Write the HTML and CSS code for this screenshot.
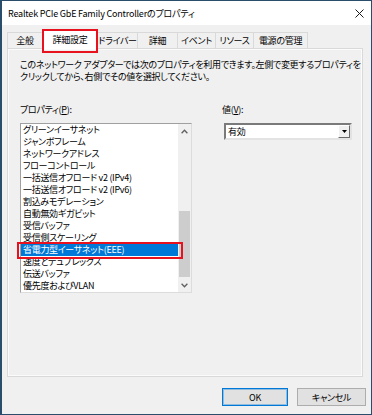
FILE: index.html
```html
<!DOCTYPE html>
<html lang="ja">
<head>
    <meta charset="UTF-8">
    <meta name="viewport" content="width=device-width, initial-scale=1.0">
    <title>Realtek PCIe GbE Family Controllerのプロパティ</title>
    <link rel="stylesheet" href="styles.css">
</head>
<body>

    <div class="window">
        <!-- Title bar -->
        <div class="titlebar">
            <span class="title">Realtek PCIe GbE Family Controllerのプロパティ</span>
            <svg class="close" width="9" height="9" viewBox="0 0 9 9">
                <path d="M0.5 0.5L8.5 8.5M8.5 0.5L0.5 8.5" stroke="#1a1a1a" stroke-width="1"/>
            </svg>
        </div>

        <div class="dialog">
            <!-- Tabs -->
            <div class="tabs">
                <div class="tab tab-general">全般</div>
                <div class="tab tab-advanced active">詳細設定</div>
                <div class="tab tab-driver">ドライバー</div>
                <div class="tab tab-details">詳細</div>
                <div class="tab tab-events">イベント</div>
                <div class="tab tab-resources">リソース</div>
                <div class="tab tab-power">電源の管理</div>
            </div>

            <!-- Tab page -->
            <div class="panel">
                <p class="desc">このネットワーク アダプターでは次のプロパティを利用できます。左側で変更するプロパティを<br>クリックしてから、右側でその値を選択してください。</p>

                <div class="columns">
                    <div class="col-left">
                        <div class="label">プロパティ(<span class="key">P</span>):</div>
                        <div class="listbox">
                            <div class="items">
                                <div class="item">グリーンイーサネット</div>
                                <div class="item">ジャンボフレーム</div>
                                <div class="item">ネットワークアドレス</div>
                                <div class="item">フローコントロール</div>
                                <div class="item">一括送信オフロード v2 (IPv4)</div>
                                <div class="item">一括送信オフロード v2 (IPv6)</div>
                                <div class="item">割込みモデレーション</div>
                                <div class="item">自動無効ギガビット</div>
                                <div class="item">受信バッファ</div>
                                <div class="item">受信側スケーリング</div>
                                <div class="item selected">省電力型イーサネット(EEE)</div>
                                <div class="item">速度とデュプレックス</div>
                                <div class="item">伝送バッファ</div>
                                <div class="item">優先度およびVLAN</div>
                            </div>
                            <div class="scrollbar">
                                <div class="arrow">
                                    <svg width="7" height="5" viewBox="0 0 7 5"><path d="M0.6 4.2L3.5 1.2L6.4 4.2" fill="none" stroke="#606060" stroke-width="1.3"/></svg>
                                </div>
                                <div class="track">
                                    <div class="thumb"></div>
                                </div>
                                <div class="arrow">
                                    <svg width="7" height="5" viewBox="0 0 7 5"><path d="M0.6 0.8L3.5 3.8L6.4 0.8" fill="none" stroke="#606060" stroke-width="1.3"/></svg>
                                </div>
                            </div>
                        </div>
                    </div>

                    <div class="col-right">
                        <div class="label">値(<span class="key">V</span>):</div>
                        <div class="select">
                            <span class="select-value">有効</span>
                            <span class="select-btn">
                                <svg width="5" height="3" viewBox="0 0 5 3"><path d="M0 0H5L2.5 3Z" fill="#000"/></svg>
                            </span>
                        </div>
                    </div>
                </div>
            </div>

            <!-- Dialog buttons -->
            <div class="actions">
                <div class="btn default">OK</div>
                <div class="btn cancel">キャンセル</div>
            </div>
        </div>
    </div>

</body>
</html>
```

FILE: styles.css
```css
* {
    box-sizing: border-box;
}

body, html {
    margin: 0;
    padding: 0;
    font-family: "Noto Sans CJK JP", sans-serif;
    font-size: 9px;
    letter-spacing: -0.3px;
    font-feature-settings: "palt";
    color: #000;
}

/* Outer window frame */
.window {
    width: 372px;
    height: 415px;
    border: 1px solid #2a4d6c;
    border-left-width: 2px;
    background-color: #f0f0f0;
    display: flex;
    flex-direction: column;
}

.titlebar {
    height: 24px;
    background-color: #fff;
    display: flex;
    align-items: center;
    justify-content: space-between;
    padding: 0 7px 0 6px;
    font-size: 9px;
    letter-spacing: -0.2px;
}

.close {
    display: block;
}

.dialog {
    flex: 1;
    padding: 5px 8px 0 5px;
    display: flex;
    flex-direction: column;
}

/* Tabs */
.tabs {
    display: flex;
    align-items: flex-end;
    height: 18px;
}

.tab {
    height: 16px;
    margin-left: -1px;
    border: 1px solid #d9d9d9;
    border-bottom: none;
    background-color: #f0f0f0;
    display: flex;
    align-items: center;
    justify-content: center;
    line-height: 1;
    white-space: nowrap;
}

.tab:first-child {
    margin-left: 0;
}

.tab.active {
    height: 19px;
    margin-bottom: -1px;
    padding-bottom: 2px;
    background-color: #fff;
    position: relative;
    z-index: 2;
}

/* red highlight around the selected tab */
.tab.active::after {
    content: "";
    position: absolute;
    left: -1px;
    top: -2px;
    right: -1px;
    bottom: -4px;
    border: 2.5px solid #e8121e;
}

.tab-general { width: 36px; }
.tab-advanced { width: 56px; }
.tab-driver { width: 41px; }
.tab-details { width: 41px; }
.tab-events { width: 39px; }
.tab-resources { width: 39px; }
.tab-power { width: 55px; }

/* Tab page */
.panel {
    height: 329px;
    border: 1px solid #d9d9d9;
    box-shadow: inset 0 0 0 1px #fbfbfb;
    background-color: #f0f0f0;
    padding: 10px 12px;
}

.desc {
    margin: 0;
    line-height: 12px;
    white-space: nowrap;
}

.columns {
    display: flex;
    margin-top: 21px;
}

.col-left {
    width: 172px;
}

.col-right {
    width: 130px;
    margin-left: 30px;
}

.label {
    line-height: 12px;
    margin-bottom: 7px;
}

.key {
    text-decoration: underline;
}

/* Property list */
.listbox {
    height: 170px;
    border: 1px solid;
    border-color: #a0a0a0 #dcdcdc #dcdcdc #a0a0a0;
    background-color: #fff;
    display: flex;
}

.items {
    width: 157px;
}

.item {
    height: 12px;
    line-height: 12px;
    padding-left: 2px;
    white-space: nowrap;
}

.item.selected {
    background-color: #0078d7;
    color: #fff;
    position: relative;
}

/* red highlight around the selected row */
.item.selected::after {
    content: "";
    position: absolute;
    left: -4px;
    top: -2px;
    right: -5px;
    bottom: -3px;
    border: 2px solid #e8121e;
}

.scrollbar {
    width: 13px;
    background-color: #f0f0f0;
    display: flex;
    flex-direction: column;
}

.arrow {
    height: 14px;
    display: flex;
    align-items: center;
    justify-content: center;
}

.arrow svg {
    display: block;
}

.track {
    flex: 1;
    display: flex;
    flex-direction: column;
    justify-content: flex-end;
    padding: 0 1px 1px;
}

.thumb {
    height: 66px;
    background-color: #cdcdcd;
}

/* Value dropdown */
.select {
    margin-left: 2px;
    width: 128px;
    height: 17px;
    border: 2px solid;
    border-color: #7a7a7a #e3e3e3 #e3e3e3 #7a7a7a;
    background-color: #fff;
    display: flex;
    align-items: center;
    padding-left: 2px;
}

.select-value {
    flex: 1;
    line-height: 1;
}

.select-btn {
    width: 12px;
    height: 13px;
    background-color: #f0f0f0;
    border: 1px solid;
    border-color: #fff #696969 #696969 #fff;
    display: flex;
    align-items: center;
    justify-content: center;
}

.select-btn svg {
    display: block;
}

/* Bottom buttons */
.actions {
    display: flex;
    justify-content: flex-end;
    gap: 9px;
    margin-top: 11px;
    margin-right: -3px;
}

.btn {
    height: 18px;
    border: 1px solid #adadad;
    background-color: #e1e1e1;
    display: flex;
    align-items: center;
    justify-content: center;
    line-height: 1;
}

.btn.default {
    width: 66px;
    border-color: #0078d7;
    box-shadow: inset 0 0 0 1px rgba(0, 120, 215, 0.35);
}

.btn.cancel {
    width: 69px;
}
```
